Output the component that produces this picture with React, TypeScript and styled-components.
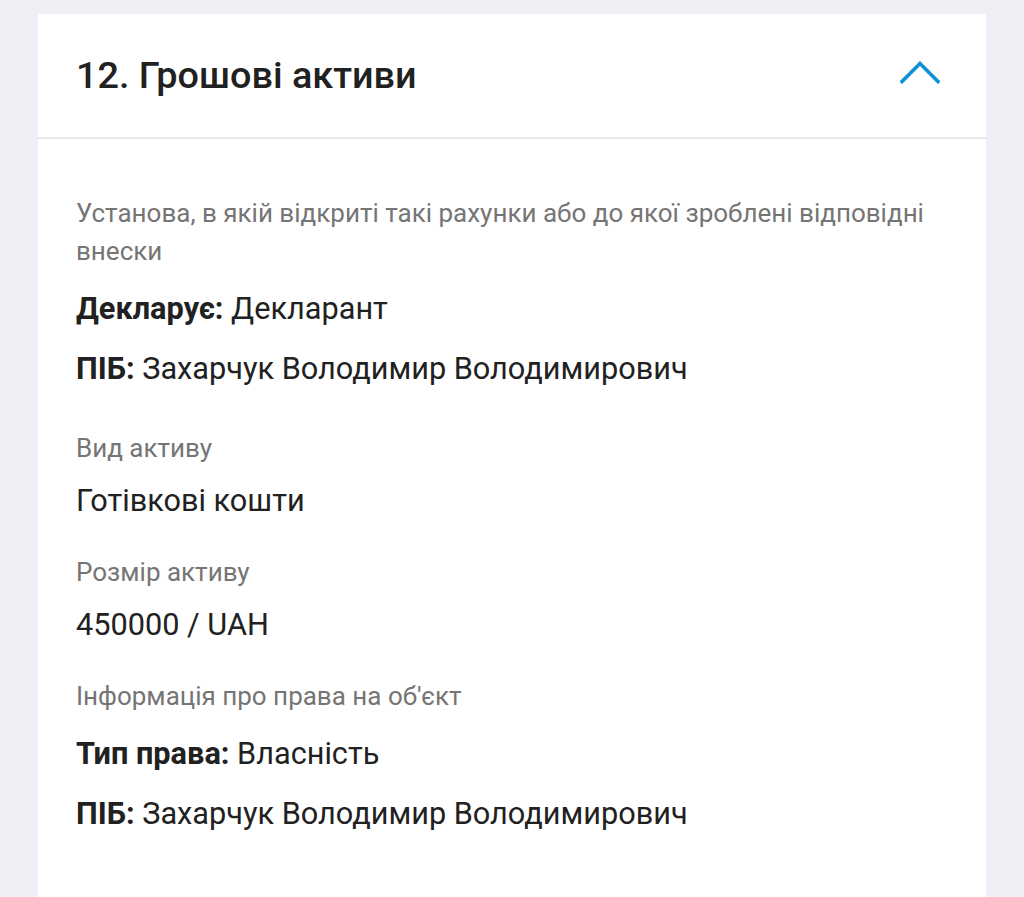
import React from 'react'
import styled, { createGlobalStyle } from 'styled-components'

const GlobalStyle = createGlobalStyle`
  html, body {
    margin: 0;
    padding: 0;
    background: #eef0f5;
    font-family: Roboto, 'Noto Sans', Arial, sans-serif;
    -webkit-font-smoothing: antialiased;
  }
`

type Row = { key: string; value: string }
type Section = { label: string; value?: string; rows?: Row[] }

const sections: Section[] = [
  {
    label:
      'Установа, в якій відкриті такі рахунки або до якої зроблені відповідні внески',
    rows: [
      { key: 'Декларує:', value: 'Декларант' },
      { key: 'ПІБ:', value: 'Захарчук Володимир Володимирович' },
    ],
  },
  { label: 'Вид активу', value: 'Готівкові кошти' },
  { label: 'Розмір активу', value: '450000 / UAH' },
  {
    label: 'Інформація про права на об\'єкт',
    rows: [
      { key: 'Тип права:', value: 'Власність' },
      { key: 'ПІБ:', value: 'Захарчук Володимир Володимирович' },
    ],
  },
]

const Page = styled.div`
  padding: 14px 38px 0;
  min-height: 897px;
  box-sizing: border-box;
`

const Card = styled.section`
  background: #fff;
  min-height: 883px;
`

const Header = styled.header`
  height: 123px;
  display: flex;
  align-items: center;
  justify-content: space-between;
  padding: 0 46px 0 38px;
  border-bottom: 2px solid #e9e9ec;
`

const Title = styled.h2`
  margin: 0 0 2px;
  font-size: 37.8px;
  font-weight: 500;
  color: #212121;
`

// the arrow sits a little above the title's middle line
const Toggle = styled.button`
  border: 0;
  background: none;
  padding: 0;
  margin-bottom: 8px;
  display: flex;
  cursor: pointer;
`

const Body = styled.div`
  padding: 55px 38px 40px;
`

const Block = styled.div<{ $rows?: boolean }>`
  & + & {
    margin-top: 32px;
  }
  padding-bottom: ${(p) => (p.$rows ? '8px' : '0')};
`

const Label = styled.div`
  font-size: 26px;
  line-height: 38px;
  color: #757575;
`

const Value = styled.div`
  margin-top: 14px;
  font-size: 30.7px;
  line-height: 40px;
  color: #212121;
`

const Rows = styled.div`
  margin-top: 19px;
  display: flex;
  flex-direction: column;
  gap: 20px;
`

const RowLine = styled.div`
  font-size: 30.7px;
  line-height: 40px;
  color: #212121;

  b {
    font-weight: 700;
  }
`

const ChevronUp = () => (
  <svg width="40" height="24" viewBox="0 0 40 24" fill="none">
    <polyline
      points="2,21.5 20,3.5 38,21.5"
      stroke="#0b8fd6"
      strokeWidth="3.6"
      strokeLinecap="square"
    />
  </svg>
)

export default function App() {
  return (
    <Page>
      <GlobalStyle />
      <Card>
        <Header>
          <Title>12. Грошові активи</Title>
          <Toggle aria-label="Згорнути">
            <ChevronUp />
          </Toggle>
        </Header>
        <Body>
          {sections.map((s) => (
            <Block key={s.label} $rows={!!s.rows}>
              <Label>{s.label}</Label>
              {s.value && <Value>{s.value}</Value>}
              {s.rows && (
                <Rows>
                  {s.rows.map((r) => (
                    <RowLine key={r.key}>
                      <b>{r.key}</b> {r.value}
                    </RowLine>
                  ))}
                </Rows>
              )}
            </Block>
          ))}
        </Body>
      </Card>
    </Page>
  )
}
